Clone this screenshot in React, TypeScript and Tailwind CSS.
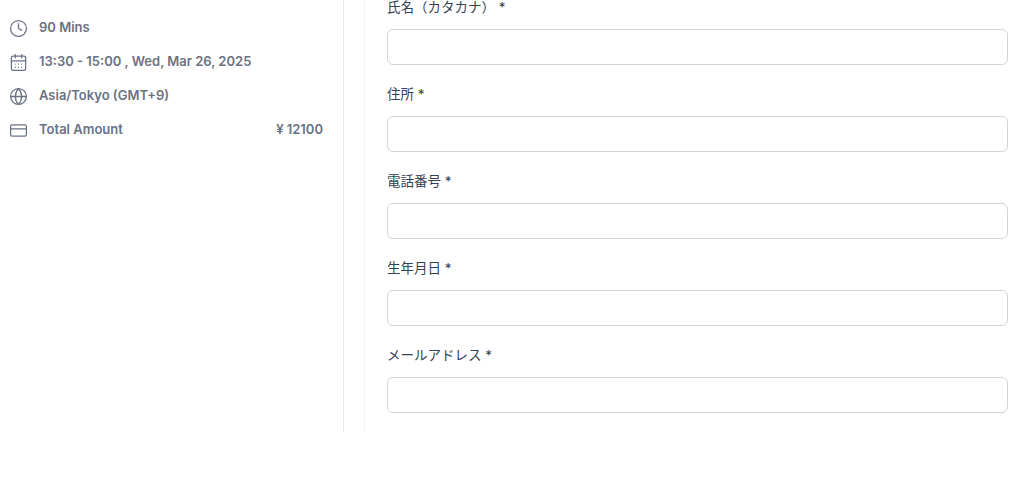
import { Clock, CalendarDays, Globe, CreditCard } from 'lucide-react'

const fields = ['氏名（カタカナ） *', '住所 *', '電話番号 *', '生年月日 *', 'メールアドレス *']

export default function App() {
  const rows = [
    { icon: Clock, text: '90 Mins' },
    { icon: CalendarDays, text: '13:30 - 15:00 , Wed, Mar 26, 2025' },
    { icon: Globe, text: 'Asia/Tokyo (GMT+9)' },
  ]
  return (
    <div className="flex h-[432px] bg-white" style={{ fontFamily: 'Inter, "Noto Sans CJK JP", sans-serif' }}>
      <div className="w-[344px] shrink-0 border-r border-gray-200 pl-[9px] pr-5 pt-[11px]">
        {rows.map(r => (
          <div key={r.text} className="flex items-center gap-[11px] h-[34px] text-[13px] font-semibold text-gray-500">
            <r.icon size={19} strokeWidth={1.6} />
            <span>{r.text}</span>
          </div>
        ))}
        <div className="flex items-center gap-[11px] h-[34px] text-[13px] font-semibold text-gray-500">
          <CreditCard size={19} strokeWidth={1.6} />
          <span className="flex-1">Total Amount</span>
          <span>¥ 12100</span>
        </div>
      </div>
      <div className="w-5 shrink-0" />
      <div className="flex-1 border-l border-gray-100 pl-[22px] pr-4 flex flex-col">
        {fields.map((f, i) => (
          <div key={f} className={i === 0 ? 'pt-0' : 'pt-[22px]'}>
            <div className="text-[13.5px] text-gray-700 h-[17px] leading-[17px] -mt-px mb-[13px]">{f}</div>
            <div className="h-[36px] rounded-md border border-gray-300" />
          </div>
        ))}
      </div>
    </div>
  )
}
